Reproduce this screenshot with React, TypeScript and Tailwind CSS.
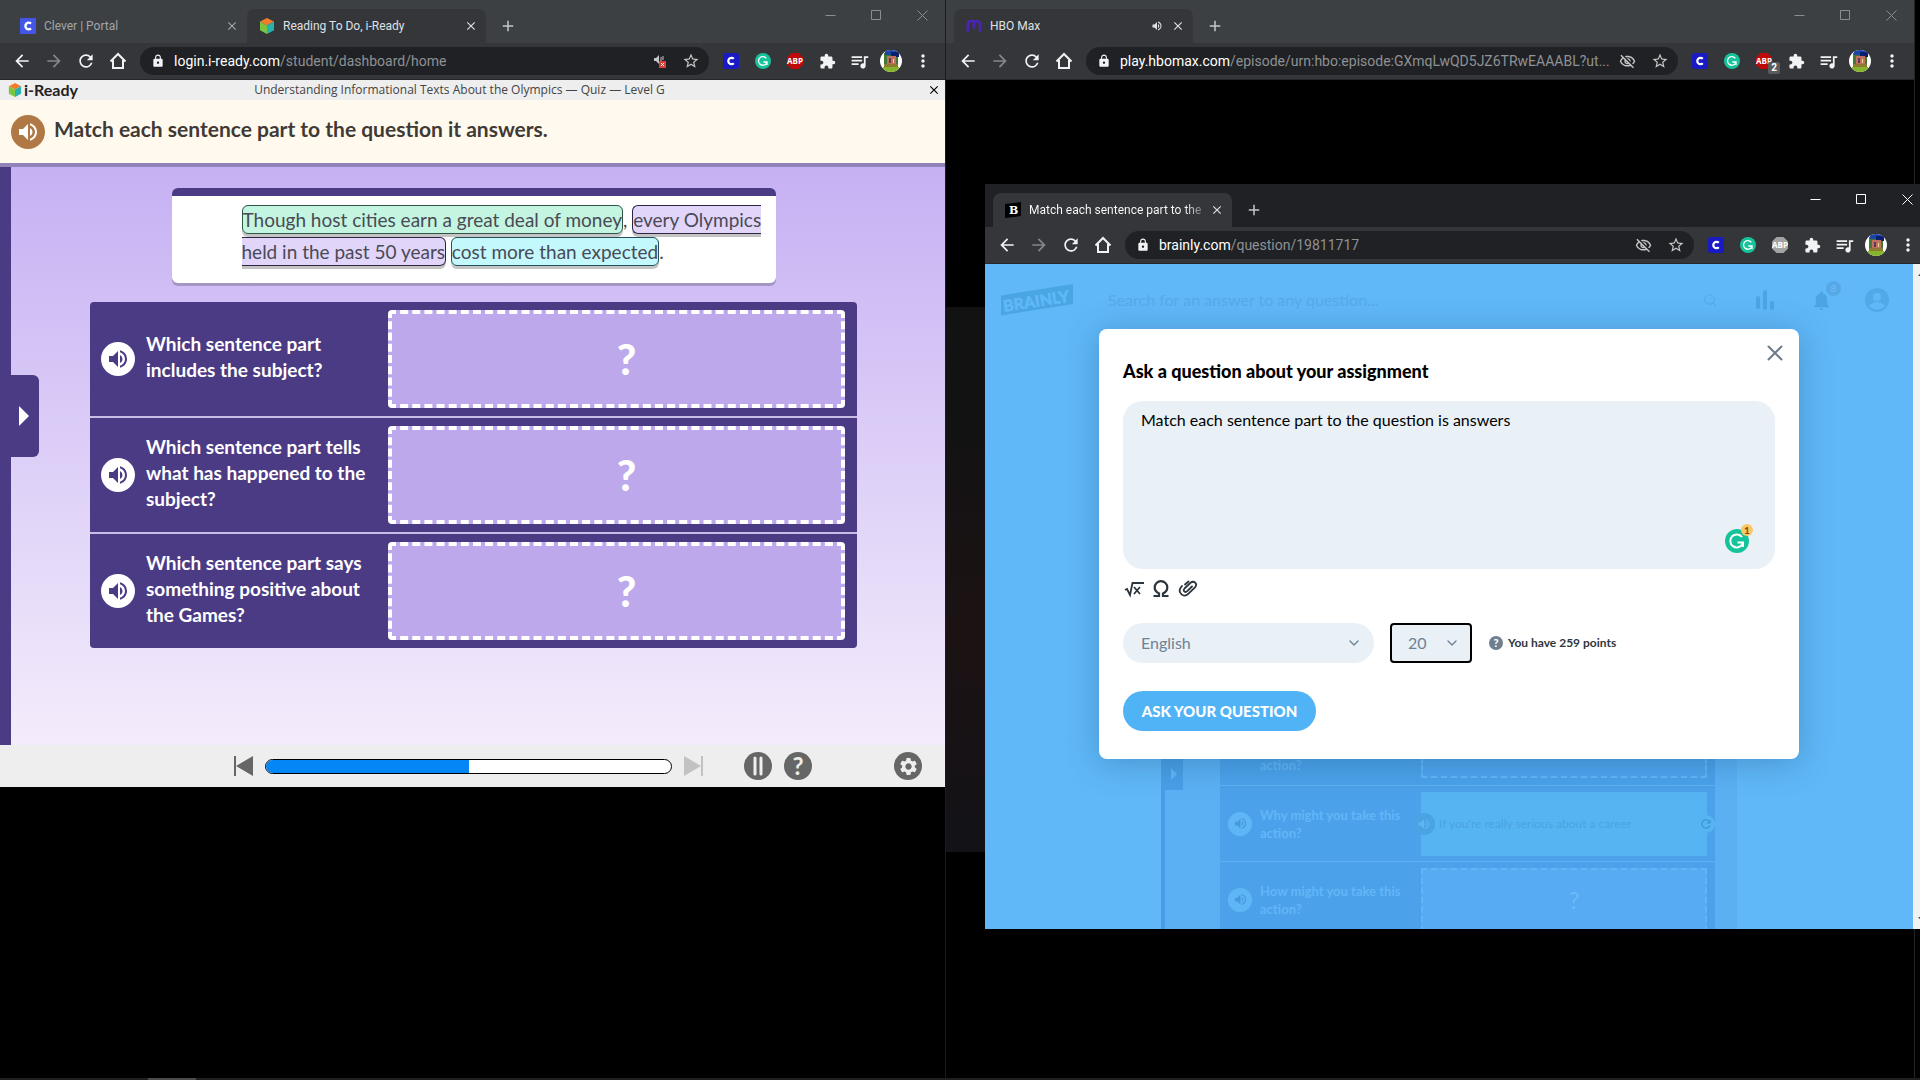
import React, { ReactNode } from "react";
import {
  MdAdd,
  MdArrowBack,
  MdArrowForward,
  MdClose,
  MdExtension,
  MdLock,
  MdMoreVert,
  MdNotifications,
  MdOutlineVisibilityOff,
  MdQueueMusic,
  MdRefresh,
  MdSettings,
  MdStarBorder,
  MdVolumeUp,
} from "react-icons/md";
import { LuChevronDown, LuSearch } from "react-icons/lu";

interface TabType {
  title: string;
  icon: ReactNode;
  active?: boolean;
  playing?: boolean;
}

interface BrowserWindowProps {
  tabs: TabType[];
  host: string;
  path: string;
  focused?: boolean;
  muted?: boolean;
  blockedCount?: number;
  blockerOff?: boolean;
  children: ReactNode;
}

const CleverIcon = () => (
  <svg width="16" height="16" viewBox="0 0 16 16">
    <rect width="16" height="16" rx="1" fill="#4356e8" />
    <path
      d="M11 5.6A3.3 3.3 0 1 0 11 10.4"
      fill="none"
      stroke="#fff"
      strokeWidth="2.4"
    />
  </svg>
);

const CubeIcon = ({ size }: { size: number }) => (
  <svg width={size} height={size} viewBox="0 0 16 16">
    <path d="M8 0l7 3.6L8 7.4 1 3.6z" fill="#f47b2c" />
    <path d="M1 3.600l7 3.800v8.600L1 12.200z" fill="#7cc63f" />
    <path d="M15 3.600L8 7.400v8.600l7-3.800z" fill="#27b3ad" />
  </svg>
);

const HboIcon = () => (
  <svg width="16" height="16" viewBox="0 0 17 16">
    <path
      d="M2 14V5.5Q2 3 5 3h6q4 0 4 4v7M8.500 3v8"
      fill="none"
      stroke="#4a24b8"
      strokeWidth="2.800"
    />
  </svg>
);

const BrainlyIcon = () => (
  <svg width="16" height="16" viewBox="0 0 16 16">
    <path d="M0 2L16 0v14L0 16z" fill="#000" />
    <text
      x="4"
      y="12"
      fill="#fff"
      fontSize="11"
      fontWeight="900"
      fontFamily="DejaVu Serif, serif"
    >
      B
    </text>
  </svg>
);

const HomeIcon = () => (
  <svg width="18" height="18" viewBox="0 0 18 18">
    <path
      d="M1.500 9.500L9 2l7.500 7.500M4 8v8h10V8"
      fill="none"
      stroke="#f1f3f4"
      strokeWidth="2"
    />
  </svg>
);

const ClassBadge = () => (
  <svg width="16" height="16" viewBox="0 0 16 16">
    <rect width="16" height="16" rx="3" fill="#1a1ac4" />
    <path
      d="M10.800 5.800A3.200 3.200 0 1 0 10.800 10.200"
      fill="none"
      stroke="#fff"
      strokeWidth="2.200"
    />
  </svg>
);

const GrammarlyIcon = ({ size }: { size: number }) => (
  <svg width={size} height={size} viewBox="0 0 24 24">
    <circle cx="12" cy="12" r="12" fill="#15c39a" />
    <path
      d="M17 8A6.500 6.500 0 1 0 17.500 15M12.500 13.500h5.500v4.500"
      fill="none"
      stroke="#fff"
      strokeWidth="2"
    />
  </svg>
);

const BlockerIcon = ({ off }: { off?: boolean }) => (
  <svg width="18" height="18" viewBox="0 0 18 18">
    <path
      d="M5.500 1h7L17 5.500v7L12.500 17h-7L1 12.500v-7z"
      fill={off ? "#a3a3a3" : "#c00a0a"}
    />
    <text
      x="9"
      y="12"
      fill="#fff"
      fontSize="8"
      fontWeight="700"
      textAnchor="middle"
      fontFamily="Open Sans, sans-serif"
    >
      ABP
    </text>
  </svg>
);

const ProfilePicture = () => (
  <svg width="22" height="22" viewBox="0 0 22 22">
    <clipPath id="face">
      <circle cx="11" cy="11" r="11" />
    </clipPath>
    <g clipPath="url(#face)">
      <rect width="22" height="22" fill="#fff" />
      <rect x="4" y="3" width="14" height="15" fill="#3f7a35" />
      <rect x="5" y="0" width="13" height="5" fill="#1c45a8" />
      <rect x="11" y="2" width="8" height="5" fill="#0b1f6e" />
      <rect x="7" y="6" width="9" height="8" fill="#c0705c" />
      <rect x="9" y="8" width="2" height="5" fill="#5c3a55" />
      <rect x="13" y="9" width="1" height="4" fill="#e8d9a0" />
      <rect x="4" y="14" width="14" height="3" fill="#8f7a32" />
      <rect x="3" y="17" width="16" height="5" fill="#86b52d" />
    </g>
  </svg>
);

const MutedIcon = () => (
  <svg width="14" height="14" viewBox="0 0 14 14">
    <path d="M1 4h2l3-3v9L3 7H1z" fill="#c4c7c5" />
    <path d="M8 3v4M10 2v4" stroke="#c4c7c5" />
    <rect x="6" y="7" width="7" height="7" fill="#d9413c" />
    <path d="M8 9l3 3M11 9l-3 3" stroke="#fff" />
  </svg>
);

const WindowControls = ({ focused }: { focused?: boolean }) => (
  <div
    className={
      focused ? "flex h-[30px] text-white" : "flex h-[30px] text-[#8b8e91]"
    }
  >
    {["M.5 5.500h10", "M.5.5h9v9h-9z", "M.5.5l10 10M10.500.5l-10 10"].map(
      (d, i) => (
        <button
          key={d}
          aria-label={["Minimize", "Maximize", "Close"][i]}
          className="flex w-[46px] items-center justify-center"
        >
          <svg width="11" height="11" viewBox="0 0 11 11">
            <path d={d} fill="none" stroke="currentColor" />
          </svg>
        </button>
      ),
    )}
  </div>
);

const BrowserWindow = ({
  tabs,
  host,
  path,
  focused,
  muted,
  blockedCount,
  blockerOff,
  children,
}: BrowserWindowProps) => {
  return (
    <div className="flex w-full min-w-0 flex-col font-[Roboto,'Open_Sans',sans-serif]">
      <div
        className={
          focused
            ? "flex h-[43px] justify-between bg-[#202124] pl-2"
            : "flex h-[43px] justify-between bg-[#3c4043] pl-2"
        }
      >
        <div className="flex items-end">
          {tabs.map((tab) => (
            <div
              key={tab.title}
              className={
                tab.active
                  ? "flex h-[34px] w-[239px] items-center gap-2 rounded-t-lg bg-[#35363a] pr-2 pl-3 text-[#dfe1e5]"
                  : "flex h-[34px] w-[239px] items-center gap-2 pr-2 pl-3 text-[#a3a6a9]"
              }
            >
              {tab.icon}
              <span
                className={
                  focused
                    ? "flex-1 bg-gradient-to-r from-white from-90% to-[#77787b] bg-clip-text text-xs whitespace-nowrap text-transparent"
                    : "flex-1 text-xs whitespace-nowrap"
                }
              >
                {tab.title}
              </span>
              {tab.playing && <MdVolumeUp size={12} />}
              <button aria-label="Close tab">
                <MdClose size={14} />
              </button>
            </div>
          ))}
          <button
            aria-label="New tab"
            className="flex h-[34px] w-11 items-center justify-center text-[#c4c7ca]"
          >
            <MdAdd size={18} />
          </button>
        </div>
        <WindowControls focused={focused} />
      </div>
      <div className="flex h-[37px] items-center border-b border-[#26272a] bg-[#35363a] pr-3 pl-3 text-[#f1f3f4]">
        <div className="flex w-32 shrink-0 gap-3">
          <button aria-label="Back">
            <MdArrowBack size={20} />
          </button>
          <button aria-label="Forward" className="text-[#85878a]">
            <MdArrowForward size={20} />
          </button>
          <button aria-label="Reload">
            <MdRefresh size={20} />
          </button>
          <button aria-label="Home" className="px-px">
            <HomeIcon />
          </button>
        </div>
        <div className="flex h-7 min-w-0 flex-1 items-center rounded-full bg-[#202124] pr-[9px] pl-[11px]">
          <MdLock size={14} className="mr-[9px] shrink-0" />
          <p className="flex-1 text-sm whitespace-nowrap text-[#8e9195]">
            <span className="text-white">{host}</span>
            {path}
          </p>
          <div className="flex items-center gap-[11px] text-[#c4c7c5]">
            {muted ? <MutedIcon /> : <MdOutlineVisibilityOff size={17} />}
            <button aria-label="Bookmark" className="pl-1">
              <MdStarBorder size={18} />
            </button>
          </div>
        </div>
        <div className="flex shrink-0 items-center pl-[6px]">
          <span className="flex w-8 justify-center">
            <ClassBadge />
          </span>
          <span className="flex w-8 justify-center">
            <GrammarlyIcon size={16} />
          </span>
          <span className="relative flex w-8 justify-center">
            <BlockerIcon off={blockerOff} />
            {blockedCount && (
              <span className="absolute top-[10px] right-0 rounded-xs bg-[#5a5b5e] px-[3px] text-[10px] leading-3 font-bold text-white">
                {blockedCount}
              </span>
            )}
          </span>
          <button aria-label="Extensions" className="flex w-8 justify-center">
            <MdExtension size={17} />
          </button>
          <button aria-label="Media" className="flex w-8 justify-center">
            <MdQueueMusic size={21} />
          </button>
          <button aria-label="Profile" className="flex w-8 justify-center">
            <ProfilePicture />
          </button>
          <button aria-label="Menu" className="ml-[6px] flex w-5 justify-center">
            <MdMoreVert size={20} />
          </button>
        </div>
      </div>
      {children}
    </div>
  );
};

const questions = [
  "Which sentence part includes the subject?",
  "Which sentence part tells what has happened to the subject?",
  "Which sentence part says something positive about the Games?",
];

const SpeakerButton = () => (
  <button
    aria-label="Listen"
    className="flex size-[34px] shrink-0 items-center justify-center rounded-full bg-white text-[#4b3b84]"
  >
    <MdVolumeUp size={24} />
  </button>
);

const ReadingPage = () => {
  return (
    <div className="font-[Lato,'Noto_Sans',sans-serif]">
      <div className="flex h-5 items-center bg-[#eeeeee] pr-1 pl-2">
        <div className="flex w-[90px] items-center gap-[2px] text-base leading-5 font-bold text-[#222]">
          <CubeIcon size={14} />
          i-Ready
        </div>
        <p className="flex-1 pr-[106px] text-center font-['Open_Sans'] text-xs whitespace-nowrap text-[#444]">
          Understanding Informational Texts About the Olympics — Quiz — Level G
        </p>
        <button aria-label="Close lesson" className="text-black">
          <MdClose size={14} />
        </button>
      </div>
      <div className="flex h-[67px] items-center gap-[9px] border-b-4 border-[#9282ba] bg-[#fffaed] pl-[11px]">
        <button
          aria-label="Listen"
          className="flex size-[34px] items-center justify-center rounded-full bg-[#b07845] text-white"
        >
          <MdVolumeUp size={24} />
        </button>
        <h1 className="pb-[6px] text-[21px] font-bold text-[#3f3a36]">
          Match each sentence part to the question it answers.
        </h1>
      </div>

      <div className="flex bg-gradient-to-b from-[#c6b1f3] to-[#f4ecfb]">
        <div className="relative w-[11px] bg-[#4b3b84]">
          <button
            aria-label="Open panel"
            className="absolute top-[208px] left-0 flex h-[82px] w-[39px] items-center justify-end rounded-r-md bg-[#4b3b84] pr-[10px]"
          >
            <svg width="10" height="20" viewBox="0 0 10 20">
              <path d="M0 0l10 10L0 20z" fill="#fff" />
            </svg>
          </button>
        </div>
        <div className="flex flex-1 flex-col items-center pt-[21px] pr-[9px] pb-[97px]">
          <div className="w-[604px] rounded-md border-t-8 border-[#4b3b84] bg-white pt-2 pr-3 pb-[15px] pl-[70px] text-[19px] leading-8 text-[#4a4a55] shadow-[0_3px_0_#a596c4]">
            <span className="rounded-md border border-[#2f5548] bg-[#c3f5e0] py-[2px] shadow-[0_3px_0_#c4c4c4]">
              Though host cities earn a great deal of money
            </span>
            ,{" "}
            <span className="rounded-md border border-[#2c2440] bg-[#e1d5fa] py-[2px] shadow-[0_3px_0_#c4c4c4]">
              every Olympics held in the past 50 years
            </span>{" "}
            <span className="rounded-md border border-[#24505a] bg-[#c3f8fc] py-[2px] shadow-[0_3px_0_#c4c4c4]">
              cost more than expected
            </span>
            .
          </div>
          <ul className="mt-[19px] flex w-[767px] flex-col gap-[2px] overflow-hidden rounded-sm bg-[#c9bde6]">
            {questions.map((question) => (
              <li
                key={question}
                className="flex h-[114px] items-center bg-[#4b3b84] pr-3 pl-[11px]"
              >
                <SpeakerButton />
                <p className="w-[253px] pr-5 pb-1 pl-[11px] text-[19px] leading-[26px] font-bold text-white">
                  {question}
                </p>
                <div className="flex h-[98px] flex-1 items-center justify-center rounded-sm border-4 border-dashed border-white bg-[#bca8ea] pl-5 text-[42px] font-black text-white">
                  ?
                </div>
              </li>
            ))}
          </ul>
        </div>
      </div>

      <div className="flex h-[42px] items-center bg-[#eeeeee] pr-[23px] pl-[234px] text-[#666]">
        <button aria-label="Previous">
          <svg width="19" height="20" viewBox="0 0 19 20">
            <path d="M0 0h2v20H0zM19 0v20L2 10z" fill="#666" />
          </svg>
        </button>
        <div
          role="progressbar"
          aria-valuenow={50}
          className="mx-3 h-[15px] w-[407px] overflow-hidden rounded-full border border-black bg-white"
        >
          <div className="h-full w-1/2 bg-[#0486f6]" />
        </div>
        <button aria-label="Next">
          <svg width="19" height="20" viewBox="0 0 19 20">
            <path d="M17 0h2v20h-2zM0 0v20l17-10z" fill="#c2c2c2" />
          </svg>
        </button>
        <div className="ml-[41px] flex flex-1 gap-3">
          <button aria-label="Pause">
            <svg width="28" height="28" viewBox="0 0 28 28">
              <circle cx="14" cy="14" r="14" fill="#666" />
              <path
                d="M11 6v16M17 6v16"
                stroke="#eee"
                strokeWidth="3"
                strokeLinecap="round"
              />
            </svg>
          </button>
          <button
            aria-label="Help"
            className="flex size-7 items-center justify-center rounded-full bg-[#666] text-2xl leading-7 font-bold text-[#eee]"
          >
            ?
          </button>
        </div>
        <button
          aria-label="Settings"
          className="flex size-7 items-center justify-center rounded-full bg-[#666] text-[#eee]"
        >
          <MdSettings size={21} />
        </button>
      </div>
    </div>
  );
};

const PreviewRow = ({ text, children }: { text: string; children: ReactNode }) => (
  <div className="flex h-[76px] items-center border-t border-[#5eb0f1] pr-2 pl-2">
    <span className="flex size-6 shrink-0 items-center justify-center rounded-full bg-[#5fb6f6] text-[#4499df]">
      <MdVolumeUp size={15} />
    </span>
    <p className="w-[169px] shrink-0 pr-4 pl-2 text-[13px] leading-[18px] font-bold text-[#62b6f7]">
      {text}
    </p>
    {children}
  </div>
);

/* faded attachment that shows through below the dialog */
const QuestionPreview = () => (
  <div className="mx-auto flex h-[171px] w-[576px] overflow-hidden border-l-4 border-[#499fe6] bg-[#5bb0f4] pr-[22px]">
    <div className="flex h-8 w-[18px] shrink-0 items-center justify-center bg-[#499fe6]">
      <svg width="6" height="12" viewBox="0 0 6 12">
        <path d="M0 0l6 6-6 6z" fill="#62b6f7" />
      </svg>
    </div>
    <div className="ml-[37px] flex-1 bg-[#4ba2ea]">
      <div className="flex h-[27px] justify-between pr-2 pl-10 text-[13px] leading-[14px] font-bold text-[#62b6f7]">
        action?
        <div className="h-5 w-[286px] border-x-2 border-b-2 border-dashed border-[#62b6f7] bg-[#4fa5ee]" />
      </div>
      <PreviewRow text="Why might you take this action?">
        <div className="flex h-16 flex-1 items-center justify-between bg-[#57b4f3] text-xs text-[#4aa3e2]">
          <span className="-ml-2 flex size-[22px] items-center justify-center rounded-full bg-[#4aa3e2] text-[#5fb6f6]">
            <MdVolumeUp size={14} />
          </span>
          <span className="flex-1 pl-1">If you're really serious about a career</span>
          <span className="-mr-2 rounded-full bg-[#57b4f3] p-[2px] text-[#3d96d6]">
            <MdRefresh size={14} />
          </span>
        </div>
      </PreviewRow>
      <PreviewRow text="How might you take this action?">
        <div className="flex h-16 flex-1 items-center justify-center border-2 border-dashed border-[#62b6f7] bg-[#56abf2] pl-5 text-2xl text-[#6bbaf8]">
          ?
        </div>
      </PreviewRow>
    </div>
  </div>
);

const AskDialog = () => {
  return (
    <form
      onSubmit={(e) => e.preventDefault()}
      className="absolute top-[65px] left-1/2 w-[700px] -translate-x-1/2 rounded-lg bg-white px-6 pt-3 pb-7 shadow-[0_4px_32px_rgba(20,80,120,0.35)]"
    >
      <div className="-mr-3 flex justify-end">
        <button type="button" aria-label="Close" className="text-[#6d7b8a]">
          <svg width="24" height="24" viewBox="0 0 24 24">
            <path
              d="M5.500 5.500l13 13M18.500 5.500l-13 13"
              stroke="currentColor"
              strokeWidth="2"
              strokeLinecap="round"
            />
          </svg>
        </button>
      </div>
      <h2 className="-mt-2 text-lg leading-7 font-black text-black">
        Ask a question about your assignment
      </h2>
      <div className="relative mt-4">
        <textarea
          aria-label="Question"
          className="block h-[168px] w-full resize-none rounded-[20px] bg-[#e9f0f6] px-[18px] py-[7px] text-base text-black focus:outline-none"
          defaultValue="Match each sentence part to the question is answers"
        />
        <div className="absolute right-[26px] bottom-4">
          <GrammarlyIcon size={24} />
          <span className="absolute -top-[5px] -right-1 flex size-3 items-center justify-center rounded-full bg-[#fcc767] text-[10px] font-bold text-[#7a4a06]">
            1
          </span>
        </div>
      </div>
      <div className="mt-[10px] flex gap-2 pl-px text-[#2c343c]">
        <button type="button" aria-label="Equation">
          <svg width="20" height="20" viewBox="0 0 20 20">
            <path
              d="M1 11l2-1 3 6L8.500 4H20M10 8l6 7M16 8l-6 7"
              fill="none"
              stroke="currentColor"
              strokeWidth="1.800"
            />
          </svg>
        </button>
        <button type="button" aria-label="Symbols">
          <svg width="18" height="20" viewBox="0 0 18 20">
            <path
              d="M1.500 17H7v-2.500C4 13 2.700 11 2.700 8.500a6.300 6.300 0 0 1 12.600 0c0 2.500-1.300 4.500-4.300 6V17h5.500"
              fill="none"
              stroke="currentColor"
              strokeWidth="2.200"
            />
          </svg>
        </button>
        <button type="button" aria-label="Attach file">
          <svg width="20" height="20" viewBox="0 0 20 20">
            <path
              d="M4 7l-1.500 2c-2 3 0 6.500 3 7.500 2 .5 3.500-.3 5-1.800l6.500-6.400c3-3.500-1-7.300-4.500-4.500L6.500 9.500c-2 2.200.6 4.600 2.700 2.700L14 7.500M10.500 2.500L7 5.500"
              fill="none"
              stroke="currentColor"
              strokeWidth="1.800"
              strokeLinecap="round"
            />
          </svg>
        </button>
      </div>
      <div className="mt-6 flex items-center text-[#6d8296]">
        <div className="relative w-[251px]">
          <select
            aria-label="Subject"
            className="h-10 w-full appearance-none rounded-full bg-[#e9f0f6] px-[18px] text-base focus:outline-none"
          >
            <option>English</option>
          </select>
          <LuChevronDown
            size={16}
            className="pointer-events-none absolute top-3 right-3"
          />
        </div>
        <div className="relative ml-4 w-[82px]">
          <select
            aria-label="Points"
            className="h-10 w-full appearance-none rounded-sm border-2 border-black bg-[#e9f0f6] px-4 text-base focus:outline-none"
          >
            <option>20</option>
          </select>
          <LuChevronDown
            size={16}
            className="pointer-events-none absolute top-3 right-3"
          />
        </div>
        <span className="mr-[5px] ml-[17px] flex size-[14px] items-center justify-center rounded-full bg-[#6d7f90] text-[11px] font-black text-white">
          ?
        </span>
        <p className="text-xs font-bold text-[#2f3840]">You have 259 points</p>
      </div>
      <button
        type="submit"
        className="mt-7 h-10 w-[193px] rounded-full bg-[#4fb3f6] text-[15px] font-black whitespace-nowrap text-white"
      >
        ASK YOUR QUESTION
      </button>
    </form>
  );
};

const BrainlyPage = () => {
  return (
    <div className="flex bg-[#f1f1f1] font-[Lato,'Noto_Sans',sans-serif]">
      <div className="relative flex-1 bg-[#60b8f8]">
        <div className="flex h-[72px] items-center pr-6 pl-4 text-[#4ba5e4]">
          <svg width="73" height="32" viewBox="0 0 73 32">
            <path d="M0 11.500L72 0v20L0 31.500z" fill="#4aa5e3" />
            <text
              x="3"
              y="28"
              fill="#60b8f8"
              stroke="#60b8f8"
              strokeWidth="0.500"
              fontSize="16"
              fontWeight="900"
              fontFamily="Lato, sans-serif"
              transform="rotate(-9 3 28)"
            >
              BRAINLY
            </text>
          </svg>
          <input
            type="text"
            aria-label="Search"
            placeholder="Search for an answer to any question..."
            className="ml-[34px] min-w-0 flex-1 text-base placeholder:text-[#55abe9] focus:outline-none"
          />
          <LuSearch size={14} className="mr-[39px] text-[#55acea]" />
          <svg width="18" height="20" viewBox="0 0 18 20">
            <path
              d="M2 8v9M9 2v16M16 13v5"
              stroke="currentColor"
              strokeWidth="4"
              strokeLinecap="round"
            />
          </svg>
          <div className="relative mr-8 ml-9">
            <MdNotifications size={23} />
            <span className="absolute -top-2 -right-2 flex size-[15px] items-center justify-center rounded-full bg-[#56a8e6] text-[10px] text-[#6dbdf8]">
              8
            </span>
          </div>
          <svg width="24" height="24" viewBox="0 0 24 24">
            <circle cx="12" cy="12" r="12" fill="#51a9e8" />
            <circle cx="12" cy="9" r="4" fill="#60b8f8" />
            <path d="M4 18q8-8 16 0-8 7-16 0z" fill="#60b8f8" />
          </svg>
        </div>
        <div className="pt-[422px]">
          <QuestionPreview />
        </div>
        <AskDialog />
      </div>
      <div className="flex w-[17px] flex-col items-center justify-between py-2">
        <svg width="7" height="4" viewBox="0 0 7 4">
          <path d="M0 4L3.500 0 7 4z" fill="#505050" />
        </svg>
        <svg width="7" height="4" viewBox="0 0 7 4">
          <path d="M0 0l3.500 4L7 0z" fill="#505050" />
        </svg>
      </div>
    </div>
  );
};

const App = () => {
  return (
    <div className="flex min-h-screen flex-col bg-black">
      <div className="grid flex-1 grid-cols-[minmax(0,945fr)_minmax(0,975fr)] overflow-hidden">
        <BrowserWindow
          tabs={[
            { title: "Clever | Portal", icon: <CleverIcon /> },
            {
              title: "Reading To Do, i-Ready",
              icon: <CubeIcon size={16} />,
              active: true,
            },
          ]}
          host="login.i-ready.com"
          path="/student/dashboard/home"
          muted
        >
          <ReadingPage />
        </BrowserWindow>
        <div className="relative border-l border-[#1c1c1d] pr-[5px]">
          <div className="h-full border-r border-[#242526]">
            <BrowserWindow
              tabs={[
                {
                  title: "HBO Max",
                  icon: <HboIcon />,
                  active: true,
                  playing: true,
                },
              ]}
              host="play.hbomax.com"
              path="/episode/urn:hbo:episode:GXmqLwQD5JZ6TRwEAAABL?ut..."
              blockedCount={2}
            >
              <div className="mt-[227px] h-[545px] bg-gradient-to-b from-[#121213] from-20% via-[#1c1213] via-60% to-[#121217]" />
            </BrowserWindow>
          </div>
          <div className="absolute top-[184px] -right-[10px] left-[39px] bg-black">
            <BrowserWindow
              tabs={[
                {
                  title: "Match each sentence part to the",
                  icon: <BrainlyIcon />,
                  active: true,
                },
              ]}
              host="brainly.com"
              path="/question/19811717"
              focused
              blockerOff
            >
              <BrainlyPage />
            </BrowserWindow>
          </div>
        </div>
      </div>
      <footer className="h-[2px] bg-[#1f1f20] pl-[148px]">
        <div className="h-full w-12 bg-[#4c4c4e]" />
      </footer>
    </div>
  );
};

export default App;
